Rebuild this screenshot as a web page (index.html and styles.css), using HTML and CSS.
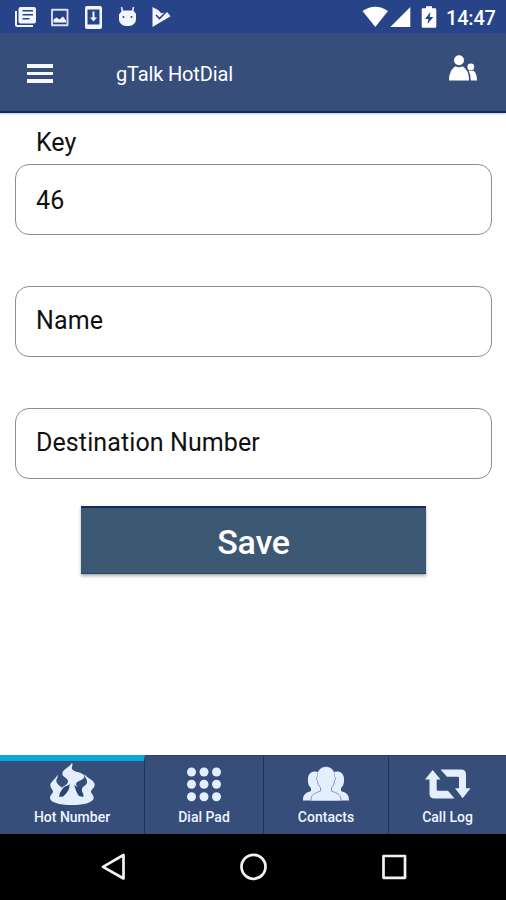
FILE: index.html
```html
<!DOCTYPE html>
<html lang="en">
<head>
<meta charset="utf-8">
<title>gTalk HotDial</title>
<link rel="stylesheet" href="styles.css">
</head>
<body>
<div class="screen">
  <div class="status">
    <svg class="notifications" viewBox="0 0 180 34" fill="#f4f6ff">
      <path fill-rule="evenodd" d="M20.500 7h13.500a2 2 0 0 1 2 2v12.500a2 2 0 0 1-2 2H20.500a2 2 0 0 1-2-2V9a2 2 0 0 1 2-2zM22.500 10v1.600H33V10zM22.500 14v1.600H33V14zM22.500 18v1.600h7V18z"/>
      <path d="M15 11h2v14h16v2H17a2 2 0 0 1-2-2z"/>
      <path d="M52 9.800h15.500v15.500H52z" fill="none" stroke="#d9def2" stroke-width="1.900" stroke-linejoin="round"/>
      <path d="M53.500 22.500v-3l3-2 3 2 3.500-3 3 4v2z"/>
      <path fill-rule="evenodd" d="M87 6h13a2 2 0 0 1 2 2v19a2 2 0 0 1-2 2H87a2 2 0 0 1-2-2V8a2 2 0 0 1 2-2zM87.500 9.500v15h12v-15z"/>
      <path d="M92.500 11.500h2v6H97l-3.500 4-3.500-4h2.500z"/>
      <path d="M119 14h17v5.500a7 6.500 0 0 1-7 6.500h-3a7 6.500 0 0 1-7-6.500zM119.500 14q1-3 4-3.500h8.500q3 .5 4 3.500z"/>
      <path d="M122.500 12l-1-5M132.500 12l1-5" stroke="#f4f6ff" stroke-width="1.500"/>
      <circle cx="123.500" cy="17" r="1" fill="#264487"/><circle cx="131.500" cy="17" r="1" fill="#264487"/>
      <path d="M152.500 7l6 3.300 2.700 3 6-1.200 3.300 4.200L152.500 27z"/>
      <path d="M156 15l3.500 3.500 7.500-7.500" fill="none" stroke="#264487" stroke-width="1.600"/>
    </svg>
    <div class="system">
      <svg class="signals" viewBox="360 0 80 34" fill="#fff">
        <path d="M362.500 11q13-8.500 25.500 0L375.300 27z"/>
        <path d="M410.300 7v20h-20z"/>
        <path fill-rule="evenodd" d="M426 6.300h6v2h3q1.300 0 1.300 1.300v16.600q0 1.500-1.300 1.500h-12q-1.300 0-1.300-1.500V9.600q0-1.300 1.300-1.300h3zM430.500 12l-5.500 7h3.500l-1 5 5.800-7h-3.600z"/>
      </svg>
      <span class="clock">14:47</span>
    </div>
  </div>
  <header class="appbar">
    <div class="menu"><i></i><i></i><i></i></div>
    <h1>gTalk HotDial</h1>
    <svg class="people" viewBox="448 54 30 28" fill="#fff">
      <circle cx="459" cy="60.300" r="5"/>
      <path d="M449 80.500q0-11 6.500-14.300 3.500 2 7 0 6.500 3.500 6.500 14.300z"/>
      <circle cx="470.800" cy="67" r="3.400"/>
      <path d="M468.500 70.500q2.500 1 5 0 3.500 3 3.500 10h-6.200q0-6-2.300-10z"/>
    </svg>
  </header>
  <main>
    <div class="label">Key</div>
    <div class="field key">46</div>
    <div class="field">Name</div>
    <div class="field destination">Destination Number</div>
    <div class="save">Save</div>
  </main>
  <nav class="tabs">
    <div class="tab hot active">
      <svg viewBox="0 3 144 144" fill="#e3efff">
        <path d="M72 8C66 22 43 27 43 41C43 52 60 53 60 64C60 74 50 76 42 83C38 79 25 72 25 62C25 55 31 54 28 44C24 57 7 64 7 76C7 86 16 89 15 96C14 101 6 105 6 114C6 127 33 135 71 135C109 135 137 127 137 113C137 105 130 102 129 96C128 89 140 84 140 74C140 61 118 55 109 42C111 54 119 60 117 68C115 76 103 79 102 87C95 84 84 80 84 72C84 63 109 62 109 49C109 36 75 37 72 26C70 20 76 15 72 8Z"/>
        <path d="M64 71C67 83 59 99 44 110H33C35 99 39 91 46 83C53 75 61 79 64 71ZM78 73C83 89 86 101 93 108L106 111C109 101 99 96 102 84C96 80 83 82 78 73Z" fill="#2c4374"/>
      </svg>
      <span>Hot Number</span>
    </div>
    <div class="tab dial">
      <svg viewBox="180 761 48 48" fill="#e3efff">
        <circle cx="191.500" cy="772" r="4.500"/><circle cx="204" cy="772" r="4.500"/><circle cx="216.500" cy="772" r="4.500"/>
        <circle cx="191.500" cy="784.300" r="4.500"/><circle cx="204" cy="784.300" r="4.500"/><circle cx="216.500" cy="784.300" r="4.500"/>
        <circle cx="191.500" cy="796.700" r="4.500"/><circle cx="204" cy="796.700" r="4.500"/><circle cx="216.500" cy="796.700" r="4.500"/>
      </svg>
      <span>Dial Pad</span>
    </div>
    <div class="tab contacts">
      <svg viewBox="302 761 48 48" fill="#e3efff">
        <path d="M303 800.500c0-7 3-7.500 8-9.500v-3c-2.500-2-3.500-5-3-9 0-5 3-7.500 7-7.500 3 0 5 1 6 3h10c1-2 3-3 6-3 4 0 7 2.500 7 7.500.3 4-.5 7-3 9v3c5 2 8 2.500 8 9.500z"/>
        <path d="M311 800.500c0-6 3-7 9.500-9.500v-3.500c-2.200-2-3-4.500-3-7-1.500-1-1.300-3 0-4 0-6 3.500-9.500 8.500-9.500s8.500 3.500 8.500 9.500c1.300 1 1.500 3 0 4 0 2.500-.8 5-3 7v3.500c6.500 2.500 9.500 3.500 9.500 9.500" stroke="#8193b8" stroke-width="1"/>
        <path d="M317.500 777c0-6.500 3.500-10 8.500-10s8.500 3.500 8.500 10z"/>
      </svg>
      <span>Contacts</span>
    </div>
    <div class="tab log">
      <svg viewBox="424 761 48 48" fill="#e3efff">
        <path d="M432.700 770l7.800 9.500h-3.800V789.500q0 1.300 1.200 1.300H448l6.500 7.700h-20q-5 0-5-5v-14H425z"/>
        <path d="M440.500 769.500h20.500q5 0 5 5v13.800h4.500l-7.800 10-7.700-10h4V778q0-1.200-1.200-1.200H447z"/>
      </svg>
      <span>Call Log</span>
    </div>
  </nav>
  <div class="system-nav">
    <svg viewBox="0 834 506 66" fill="none" stroke="#f2f2f2" stroke-width="2.700" stroke-linejoin="round">
      <path d="M123.500 855v23.500L103 866.800z"/>
      <circle cx="253.500" cy="866.800" r="12"/>
      <path d="M383.500 856h21.500v21.800h-21.500z"/>
    </svg>
  </div>
</div>
</body>
</html>
```
FILE: styles.css
```css
* { box-sizing: border-box; }
body { margin: 0; background: #fff; font-family: Roboto, sans-serif; }
svg { display: block; }
.screen { display: flex; flex-direction: column; width: 506px; height: 900px; overflow: hidden; }
.status { display: flex; justify-content: space-between; height: 34px; background: #264487; color: #fff; }
.notifications { width: 180px; height: 34px; }
.system { display: flex; padding-right: 11px; }
.signals { width: 80px; height: 34px; }
.clock { width: 55px; padding-left: 6px; font-size: 20px; font-weight: 500; line-height: 36px; letter-spacing: -.2px; white-space: nowrap; }
.appbar { display: flex; align-items: center; height: 79px; padding: 0 28px 0 27px; border-bottom: 2px solid #0d2864; background: #374e7b; color: #fff; box-shadow: 0 1px 2px #c8c5c5; }
.menu { display: flex; flex-direction: column; gap: 4px; width: 26px; margin-top: 2px; }
.menu i { height: 3.5px; background: #f7f8ff; }
h1 { margin: 3px 0 0 63px; font-size: 20px; font-weight: 400; line-height: 24px; letter-spacing: -.15px; }
.people { width: 30px; height: 28px; margin: -9px 0 0 auto; }
main { flex: 1; padding: 13px 14px 0 15px; color: #111; font-size: 25px; }
.label { height: 38px; padding-left: 21px; line-height: 33px; }
.field { height: 71px; margin-bottom: 51px; padding-left: 20px; border: 1.5px solid #8e8e8e; border-radius: 14px; line-height: 67px; letter-spacing: .1px; }
.key { line-height: 71px; }
.destination { margin-bottom: 27px; }
.save { width: 345px; height: 68px; margin-left: 66px; border-top: 2px solid #102c5c; border-bottom: 1px solid #234666; background: #3c5873; color: #fff; box-shadow: 0 2px 3px #aaa; font-size: 34px; font-weight: 500; line-height: 68px; letter-spacing: -.2px; text-align: center; }
.tabs { display: grid; grid-template-columns: 145px 119px 125px 117px; height: 79px; background: #374e7b; }
.tab { display: flex; flex-direction: column; align-items: center; padding-top: 5px; border-right: 1px solid #1d315c; border-top: 1px solid #2a416f; color: #eff5ff; font-size: 14px; font-weight: 500; }
.tab:last-child { border-right: 0; }
.active { padding-top: 0; border-top: 6px solid #06a9da; }
.tab svg { width: 48px; height: 48px; }
.tab span { line-height: 16px; white-space: nowrap; }
.system-nav { height: 66px; background: #000; }
.system-nav svg { width: 506px; height: 66px; }
```
